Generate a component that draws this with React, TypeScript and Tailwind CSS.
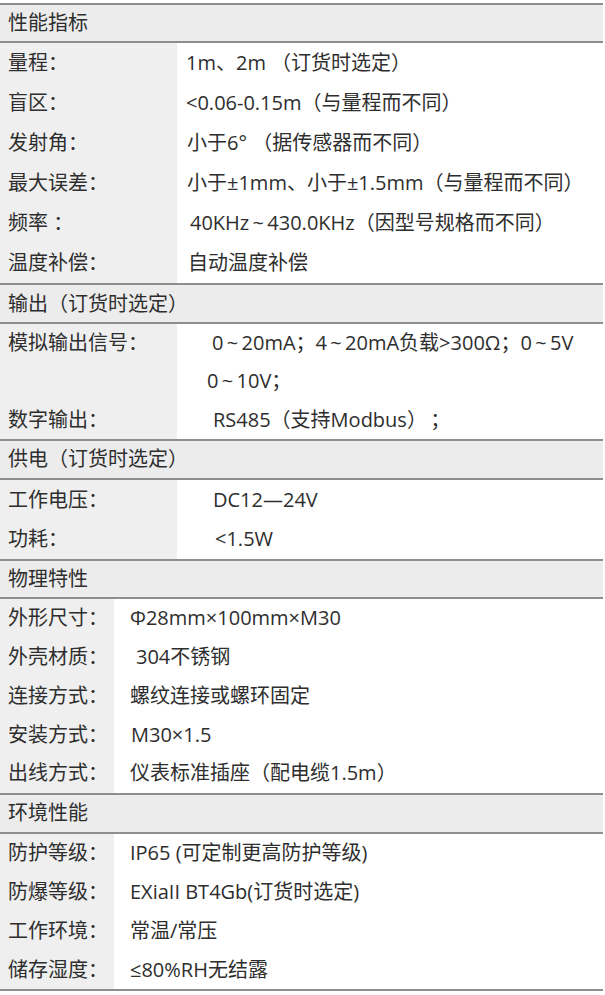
type Row = {
  label: string;
  value: string;
  indent: string;
};

type Section = {
  title: string;
  labelWidth: string;
  rowHeight: string;
  headerHeight: string;
  rows: Row[];
};

// heights include the 2px top border (border-box)
const sections: Section[] = [
  {
    title: '性能指标',
    labelWidth: 'w-[177px]',
    rowHeight: 'h-[40px]',
    headerHeight: 'h-[38px]',
    rows: [
      { label: '量程：', value: '1m、2m （订货时选定）', indent: 'pl-[9px]' },
      { label: '盲区：', value: '<0.06-0.15m（与量程而不同）', indent: 'pl-[9px]' },
      { label: '发射角：', value: '小于6° （据传感器而不同）', indent: 'pl-[10px]' },
      { label: '最大误差：', value: '小于±1mm、小于±1.5mm（与量程而不同）', indent: 'pl-[10px]' },
      { label: '频率 ：', value: '40KHz\u2009~\u2009430.0KHz（因型号规格而不同）', indent: 'pl-[13px]' },
      { label: '温度补偿：', value: '自动温度补偿', indent: 'pl-[11px]' },
    ],
  },
  {
    title: '输出（订货时选定）',
    labelWidth: 'w-[177px]',
    rowHeight: 'h-[38.3px]',
    headerHeight: 'h-[39px]',
    rows: [
      {
        label: '模拟输出信号：',
        value: '0\u2009~\u200920mA；4\u2009~\u200920mA负载>300Ω；0\u2009~\u20095V',
        indent: 'pl-[35px]',
      },
      { label: '', value: '0\u2009~\u200910V；', indent: 'pl-[30px]' },
      { label: '数字输出：', value: 'RS485（支持Modbus）\u2009；', indent: 'pl-[36px]' },
    ],
  },
  {
    title: '供电（订货时选定）',
    labelWidth: 'w-[177px]',
    rowHeight: 'h-[39.5px]',
    headerHeight: 'h-[39px]',
    rows: [
      { label: '工作电压：', value: 'DC12—24V', indent: 'pl-[36px]' },
      { label: '功耗：', value: '<1.5W', indent: 'pl-[38px]' },
    ],
  },
  {
    title: '物理特性',
    labelWidth: 'w-[114px]',
    rowHeight: 'h-[38.8px]',
    headerHeight: 'h-[38px]',
    rows: [
      { label: '外形尺寸：', value: 'Φ28mm×100mm×M30', indent: 'pl-[16px]' },
      { label: '外壳材质：', value: '304不锈钢', indent: 'pl-[22px]' },
      { label: '连接方式：', value: '螺纹连接或螺环固定', indent: 'pl-[16px]' },
      { label: '安装方式：', value: 'M30×1.5', indent: 'pl-[17px]' },
      { label: '出线方式：', value: '仪表标准插座（配电缆1.5m）', indent: 'pl-[16px]' },
    ],
  },
  {
    title: '环境性能',
    labelWidth: 'w-[114px]',
    rowHeight: 'h-[38.75px]',
    headerHeight: 'h-[39px]',
    rows: [
      { label: '防护等级：', value: 'IP65 (可定制更高防护等级)', indent: 'pl-[16px]' },
      { label: '防爆等级：', value: 'EXiaII BT4Gb(订货时选定)', indent: 'pl-[16px]' },
      { label: '工作环境：', value: '常温/常压', indent: 'pl-[16px]' },
      { label: '储存湿度：', value: '≤80%RH无结露', indent: 'pl-[16px]' },
    ],
  },
];

const SpecSection = ({ section }: { section: Section }) => (
  <div>
    {/* header row */}
    <div
      className={`border-t-2 border-[#8e8e8e] bg-[#ececec] ${section.headerHeight} flex items-center pl-2`}
    >
      {section.title}
    </div>

    {/* body */}
    <div className="border-t-2 border-[#8e8e8e]">
      {section.rows.map((row, i) => (
        <div key={i} className={`flex ${section.rowHeight}`}>
          <div className={`${section.labelWidth} shrink-0 bg-[#efefef] flex items-center pl-2`}>
            {row.label}
          </div>
          <div className={`flex-1 flex items-center whitespace-nowrap ${row.indent}`}>
            {row.value}
          </div>
        </div>
      ))}
    </div>
  </div>
);

export default function App() {
  return (
    <div
      className="w-[605px] h-[995px] bg-white pt-[3px] text-[20px] text-[#2e2e2e] overflow-hidden"
      style={{ fontFamily: "'Open Sans', 'Noto Sans CJK SC', sans-serif" }}
    >
      <div className="w-[603px]">
        {sections.map(s => (
          <SpecSection key={s.title} section={s} />
        ))}
        <div className="border-t-2 border-[#8e8e8e]" />
      </div>
    </div>
  );
}
